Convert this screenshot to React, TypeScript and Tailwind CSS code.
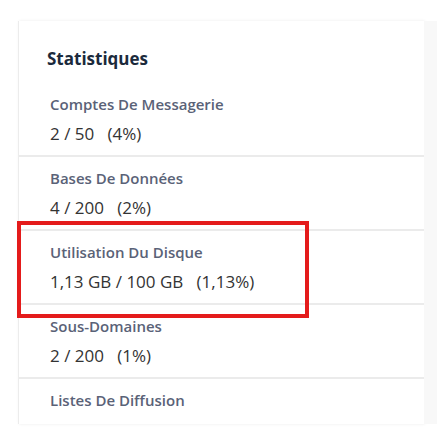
const stats = [
  { label: "Comptes De Messagerie", value: "2 / 50", pct: "(4%)" },
  { label: "Bases De Données", value: "4 / 200", pct: "(2%)" },
  { label: "Utilisation Du Disque", value: "1,13 GB / 100 GB", pct: "(1,13%)" },
  { label: "Sous-Domaines", value: "2 / 200", pct: "(1%)" },
  { label: "Listes De Diffusion", value: "", pct: "" },
];

export default function App() {
  return (
    <div
      className="relative w-[448px] h-[441px] overflow-hidden bg-white pt-[21px] pl-[18px]"
      style={{ fontFamily: '"Open Sans", "Noto Sans", sans-serif' }}
    >
      <div className="flex h-[403px]">
        {/* Carte */}
        <div className="w-[406px] h-full bg-white border-l border-[#ececec] shadow-[1px_0_3px_rgba(0,0,0,0.08)] overflow-hidden">
          <h2 className="pl-[28px] pt-[26px] pb-[12px] text-[17px] leading-[24px] font-bold text-[#1b2a3c]">
            Statistiques
          </h2>
          <div>
            {stats.map((s, i) => (
              <div
                key={i}
                className="h-[74px] border-b-2 border-[#ebebeb] pl-[31px] pt-[11px]"
              >
                <p className="text-[15px] leading-[20px] font-semibold text-[#5a6277]">
                  {s.label}
                </p>
                {s.value && (
                  <p className="mt-[8px] text-[17px] leading-[24px] text-[#333333] whitespace-pre">
                    {s.value}
                    {"   "}
                    {s.pct}
                  </p>
                )}
              </div>
            ))}
          </div>
        </div>
        {/* Bande grise */}
        <div className="w-[13px] h-full bg-[#f8f8f8]" />
      </div>

      {/* Cadre rouge */}
      <div className="absolute left-[17px] top-[221px] w-[292px] h-[97px] border-[4px] border-[#e41b1b]" />
    </div>
  );
}
